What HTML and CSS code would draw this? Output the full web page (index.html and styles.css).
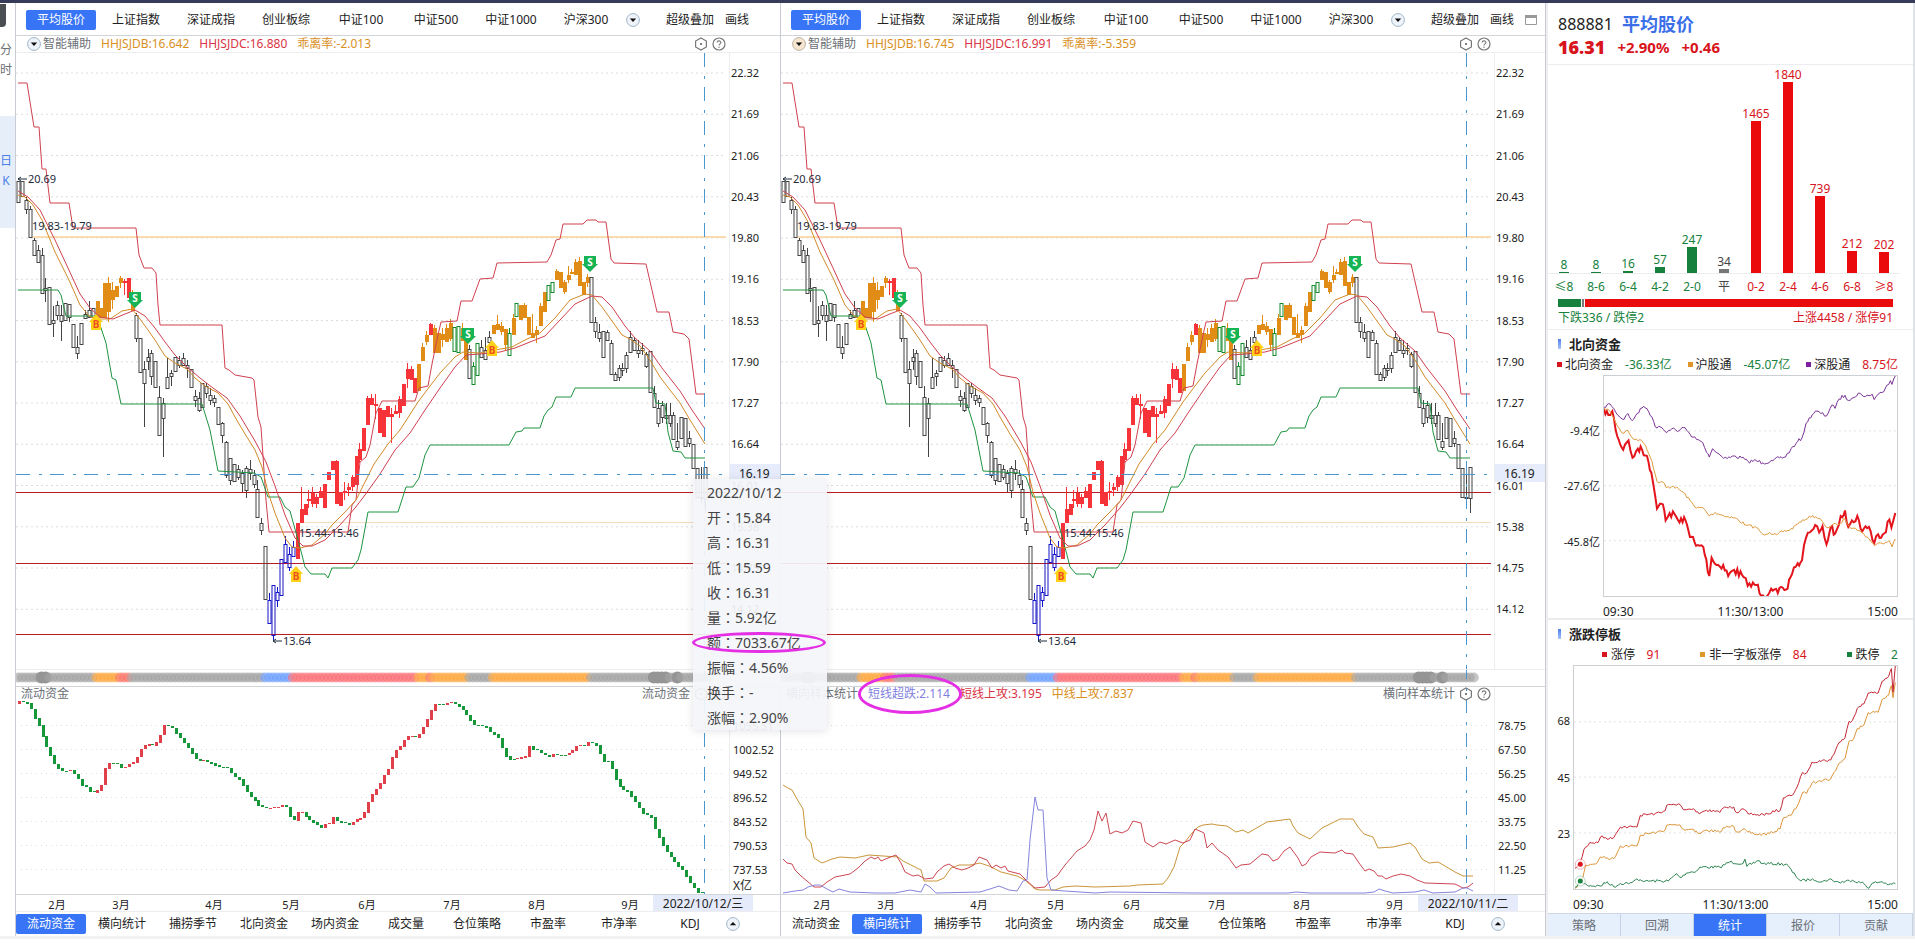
FILE: index.html
```html
<!DOCTYPE html>
<html lang="zh-CN">
<head>
  <meta charset="UTF-8" />
  <meta name="viewport" content="width=device-width, initial-scale=1.0" />
  <title>平均股价</title>
  <link rel="stylesheet" href="styles.css">
</head>
<body>
  <svg class="defs" aria-hidden="true">
    <symbol id="i-down" viewBox="0 0 14 14">
      <circle cx="7" cy="7" r="6.4" fill="#eef4fa" stroke="#9fb4c8" />
      <path d="M3.8 5.6h6.4L7 8.9z" fill="#111" />
    </symbol>
    <symbol id="i-down-warm" viewBox="0 0 14 14">
      <circle cx="7" cy="7" r="6.4" fill="#f7e6cf" stroke="#b9b2a6" />
      <path d="M3.8 5.6h6.4L7 8.9z" fill="#111" />
    </symbol>
    <symbol id="i-up" viewBox="0 0 14 14">
      <circle cx="7" cy="7" r="6.4" fill="#eef4fa" stroke="#9fb4c8" />
      <path d="M3.8 8.2h6.4L7 4.9z" fill="#111" />
    </symbol>
    <symbol id="i-hex" viewBox="0 0 14 14">
      <path d="M7 1l5.4 3v6L7 13l-5.4-3V4z" fill="none" stroke="#777" stroke-width="1.2" />
      <circle cx="7" cy="7" r="1" fill="#555" />
    </symbol>
    <symbol id="i-help" viewBox="0 0 14 14">
      <circle cx="7" cy="7" r="6" fill="none" stroke="#777" stroke-width="1.2" />
      <path d="M5.1 5.6c0-2.3 3.8-2.3 3.8 0C8.900 6.900 7 6.900 7 8.400" fill="none" stroke="#777" stroke-width="1.1" />
      <circle cx="7" cy="10.200" r=".7" fill="#777" />
    </symbol>
    <symbol id="i-window" viewBox="0 0 12 10">
      <path d="M.5.5h11v9H.5z" fill="#fff" stroke="#999" />
      <path d="M0 0h12v3H0z" fill="#999" />
    </symbol>
  </svg>

  <div class="topbar"></div>

  <div class="app">
    <nav class="rail">
      <button class="rail-item">分时</button>
      <button class="rail-item active">日K</button>
    </nav>

    <section class="panel" data-panel="left">
      <nav class="tabs">
        <button class="tab active">平均股价</button>
        <button class="tab">上证指数</button>
        <button class="tab">深证成指</button>
        <button class="tab">创业板综</button>
        <button class="tab">中证100</button>
        <button class="tab">中证500</button>
        <button class="tab">中证1000</button>
        <button class="tab">沪深300</button>
        <button class="icon-btn" aria-label="更多"><svg><use href="#i-down" /></svg></button>
        <button class="tool first">超级叠加</button>
        <button class="tool">画线</button>
      </nav>
      <div class="legend">
        <button class="icon-btn" aria-label="指标"><svg><use href="#i-down" /></svg></button>
        <span class="legend-name">智能辅助</span>
        <span class="c-orange">HHJSJDB:16.642</span>
        <span class="c-red">HHJSJDC:16.880</span>
        <span class="c-orange">乖离率:-2.013</span>
        <div class="legend-tools">
          <button class="icon-btn" aria-label="设置"><svg><use href="#i-hex" /></svg></button>
          <button class="icon-btn" aria-label="帮助"><svg><use href="#i-help" /></svg></button>
        </div>
      </div>
      <div class="chart chart-main"></div>
      <div class="chart chart-band"></div>
      <div class="sub">
        <div class="chart chart-sub"></div>
        <div class="sub-legend">
          <span class="legend-name">流动资金</span>
          <div class="legend-tools">
            <span class="legend-name">流动资金</span>
            <button class="icon-btn" aria-label="设置"><svg><use href="#i-hex" /></svg></button>
            <button class="icon-btn" aria-label="帮助"><svg><use href="#i-help" /></svg></button>
          </div>
        </div>
      </div>
      <div class="chart chart-months"></div>
      <nav class="tabs-bottom">
        <button class="tab active">流动资金</button>
        <button class="tab">横向统计</button>
        <button class="tab">捕捞季节</button>
        <button class="tab">北向资金</button>
        <button class="tab">场内资金</button>
        <button class="tab">成交量</button>
        <button class="tab">仓位策略</button>
        <button class="tab">市盈率</button>
        <button class="tab">市净率</button>
        <button class="tab">KDJ</button>
        <button class="icon-btn" aria-label="展开"><svg><use href="#i-up" /></svg></button>
      </nav>

      <ul class="tooltip">
        <li>2022/10/12</li>
        <li>开<i>：</i>15.84</li>
        <li>高<i>：</i>16.31</li>
        <li>低<i>：</i>15.59</li>
        <li>收<i>：</i>16.31</li>
        <li>量<i>：</i>5.92亿</li>
        <li class="circled">额<i>：</i>7033.67亿</li>
        <li>振幅<i>：</i>4.56%</li>
        <li>换手<i>：</i>-</li>
        <li>涨幅<i>：</i>2.90%</li>
      </ul>
    </section>

    <section class="panel" data-panel="right">
      <nav class="tabs">
        <button class="tab active">平均股价</button>
        <button class="tab">上证指数</button>
        <button class="tab">深证成指</button>
        <button class="tab">创业板综</button>
        <button class="tab">中证100</button>
        <button class="tab">中证500</button>
        <button class="tab">中证1000</button>
        <button class="tab">沪深300</button>
        <button class="icon-btn" aria-label="更多"><svg><use href="#i-down" /></svg></button>
        <button class="tool first">超级叠加</button>
        <button class="tool">画线</button>
        <button class="tool win" aria-label="窗口"><svg><use href="#i-window" /></svg></button>
      </nav>
      <div class="legend">
        <button class="icon-btn" aria-label="指标"><svg><use href="#i-down-warm" /></svg></button>
        <span class="legend-name">智能辅助</span>
        <span class="c-orange">HHJSJDB:16.745</span>
        <span class="c-red">HHJSJDC:16.991</span>
        <span class="c-orange">乖离率:-5.359</span>
        <div class="legend-tools">
          <button class="icon-btn" aria-label="设置"><svg><use href="#i-hex" /></svg></button>
          <button class="icon-btn" aria-label="帮助"><svg><use href="#i-help" /></svg></button>
        </div>
      </div>
      <div class="chart chart-main"></div>
      <div class="chart chart-band"></div>
      <div class="sub">
        <div class="chart chart-sub"></div>
        <div class="sub-legend">
          <span class="legend-name">横向样本统计</span>
          <span class="c-violet circled">短线超跌:2.114</span>
          <span class="c-red">短线上攻:3.195</span>
          <span class="c-orange">中线上攻:7.837</span>
          <div class="legend-tools">
            <span class="legend-name">横向样本统计</span>
            <button class="icon-btn" aria-label="设置"><svg><use href="#i-hex" /></svg></button>
            <button class="icon-btn" aria-label="帮助"><svg><use href="#i-help" /></svg></button>
          </div>
        </div>
      </div>
      <div class="chart chart-months"></div>
      <nav class="tabs-bottom">
        <button class="tab">流动资金</button>
        <button class="tab active">横向统计</button>
        <button class="tab">捕捞季节</button>
        <button class="tab">北向资金</button>
        <button class="tab">场内资金</button>
        <button class="tab">成交量</button>
        <button class="tab">仓位策略</button>
        <button class="tab">市盈率</button>
        <button class="tab">市净率</button>
        <button class="tab">KDJ</button>
        <button class="icon-btn" aria-label="展开"><svg><use href="#i-up" /></svg></button>
      </nav>
    </section>

    <aside class="side">
      <header class="quote">
        <div class="quote-name"><span>888881</span><strong>平均股价</strong></div>
        <div class="quote-price"><strong>16.31</strong><span>+2.90%</span><span>+0.46</span></div>
      </header>

      <section class="dist">
        <div class="dist-bars" id="distBars"></div>
        <div class="ratio"><i class="down"></i><i class="flat"></i><i class="up"></i></div>
        <div class="ratio-text"><span class="green">下跌336 / 跌停2</span><span class="red">上涨4458 / 涨停91</span></div>
      </section>

      <section class="flow">
        <h3>北向资金</h3>
        <div class="keys">
          <span class="key k-red">北向资金</span><b class="green">-36.33亿</b>
          <span class="key k-orange">沪股通</span><b class="green">-45.07亿</b>
          <span class="key k-purple">深股通</span><b class="red">8.75亿</b>
        </div>
        <div class="plot">
          <div class="plot-y"><span>-9.4亿</span><span>-27.6亿</span><span>-45.8亿</span></div>
          <div class="chart plot-area" id="flowChart"></div>
        </div>
        <div class="plot-x"><span>09:30</span><span>11:30/13:00</span><span>15:00</span></div>
      </section>

      <section class="limit">
        <h3>涨跌停板</h3>
        <div class="keys">
          <span class="key k-red">涨停</span><b class="red">91</b>
          <span class="key k-orange">非一字板涨停</span><b class="red">84</b>
          <span class="key k-green">跌停</span><b class="green">2</b>
        </div>
        <div class="plot">
          <div class="plot-y"><span>68</span><span>45</span><span>23</span></div>
          <div class="chart plot-area" id="limitChart"></div>
        </div>
        <div class="plot-x"><span>09:30</span><span>11:30/13:00</span><span>15:00</span></div>
      </section>

      <nav class="side-tabs">
        <button>策略</button>
        <button>回溯</button>
        <button class="active">统计</button>
        <button>报价</button>
        <button>贡献</button>
      </nav>
    </aside>
  </div>

  <div class="footer"></div>

  <script src="charts.js"></script>
</body>
</html>
```
FILE: styles.css
```css
:root {
  --blue: #3875f6;
  --line: #d2d5d8;
  --line-light: #ededf0;
  --text: #222;
  --muted: #6b6f76;
  --red: #d93545;
  --orange: #d98f1d;
  --up: #d8141c;
  --down: #16813c;
}

* {
  box-sizing: border-box;
}

body {
  margin: 0;
  height: 100vh;
  min-width: 1500px;
  display: flex;
  flex-direction: column;
  overflow: hidden;
  font-family: "Noto Sans", "Noto Sans CJK SC", sans-serif;
  font-size: 12px;
  line-height: 16px;
  color: var(--text);
  background: #fff;
}

button {
  border: 0;
  padding: 0;
  background: none;
  color: inherit;
  font: inherit;
  cursor: pointer;
  white-space: nowrap;
}

.defs {
  position: absolute;
  width: 0;
  height: 0;
}

.topbar {
  height: 3px;
  flex: none;
  background: #373a58;
}

.footer {
  height: 9px;
  flex: none;
  border-top: 3px solid #f2f2f2;
}

.app {
  flex: 1;
  min-height: 0;
  display: flex;
}

/* left rail */
.rail {
  width: 16px;
  flex: none;
  border-right: 1px solid #c9ccd2;
  padding-top: 1px;
}

.rail::before {
  content: "";
  display: block;
  width: 6px;
  height: 23px;
  background: #4a4d52;
  border-radius: 0 0 4px 0;
}

.rail-item {
  width: 12px;
  height: 89px;
  line-height: 20px;
  white-space: normal;
  word-break: break-all;
  color: var(--muted);
  padding-bottom: 24px;
}

.rail-item.active {
  width: 15px;
  height: 112px;
  padding: 0 3px 2px 0;
  background: #e6eefa;
  color: #4a80e8;
}

/* chart panels */
.panel {
  flex: 1;
  min-width: 0;
  display: flex;
  flex-direction: column;
  position: relative;
  border-right: 1px solid #c9ccd2;
}

.panel[data-panel="left"] {
  z-index: 1;
}

.tabs {
  height: 33px;
  flex: none;
  display: flex;
  align-items: center;
  gap: 5px;
  padding: 1px 0 0 10px;
  border-bottom: 1px solid var(--line);
}

.tab {
  width: 70px;
  height: 20px;
  line-height: 18px;
  border-radius: 2px;
}

.tab.active {
  background: var(--blue);
  color: #fff;
}

.icon-btn {
  width: 14px;
  height: 14px;
  flex: none;
}

.icon-btn svg {
  display: block;
  width: 14px;
  height: 14px;
}

.tool.first {
  margin-left: 21px;
}

.tool {
  margin-left: 6px;
}

.tool svg {
  display: block;
  width: 12px;
  height: 10px;
}

.legend {
  height: 17px;
  flex: none;
  display: flex;
  align-items: center;
  padding: 0 54px 0 11px;
  border-bottom: 1px solid var(--line-light);
}

.legend-name {
  color: var(--muted);
  margin: 0 10px 0 2px;
}

.legend > span + span {
  margin-right: 10px;
}

.legend-tools {
  display: flex;
  align-items: center;
  gap: 4px;
  margin-left: auto;
}

.legend-tools .legend-name {
  margin: 0;
}

.c-orange { color: var(--orange); }
.c-red { color: var(--red); }
.c-violet { color: #7f7fe0; }
.red { color: var(--up); }
.green { color: var(--down); }

.chart {
  overflow: hidden;
}

.chart svg {
  display: block;
}

.chart-main {
  flex: 1;
  min-height: 0;
}

.chart-band {
  height: 18px;
  flex: none;
  border-top: 1px solid var(--line-light);
  border-bottom: 1px solid var(--line);
}

.sub {
  position: relative;
  height: 208px;
  flex: none;
  border-bottom: 1px solid var(--line);
}

.chart-sub {
  height: 100%;
}

.sub-legend {
  position: absolute;
  inset: 0 0 auto 0;
  height: 14px;
  display: flex;
  align-items: center;
  gap: 10px;
  padding: 0 54px 0 5px;
}

.sub-legend > .legend-name {
  margin: 0;
}

.chart-months {
  height: 17px;
  flex: none;
  border-bottom: 1px solid var(--line-light);
}

.tabs-bottom {
  height: 24px;
  flex: none;
  display: flex;
  align-items: center;
  gap: 1px;
}

/* svg text */
.chart text {
  font-size: 11px;
  fill: #222;
}

.chart .cursor-text {
  font-size: 12px;
}

.chart .note {
  fill: #1d2b3a;
}

.chart .badge-text {
  font-size: 10px;
  font-weight: bold;
}

.chart .badge-text.sell { fill: #fff; }
.chart .badge-text.buy { fill: #f0501e; }

/* hover card */
.tooltip {
  position: absolute;
  top: 476px;
  right: -47px;
  width: 134px;
  height: 251px;
  margin: 0;
  padding: 2px 14px;
  display: flex;
  flex-direction: column;
  list-style: none;
  font-size: 14px;
  color: #444;
  background: rgba(244, 245, 250, 0.93);
  box-shadow: 0 1px 8px rgba(60, 60, 80, 0.15);
}

.tooltip li {
  flex: 1;
  line-height: 24px;
  white-space: nowrap;
}

/* centred full-width colon */
.tooltip i {
  font-style: normal;
  font-family: "Noto Sans CJK TC", sans-serif;
  -webkit-locale: "zh-Hant";
}

.circled {
  position: relative;
}

.circled::after {
  content: "";
  position: absolute;
  border: 3px solid #e42fe4;
  border-radius: 50%;
}

.tooltip .circled::after {
  inset: 2px -13px 2px -15px;
}

.sub-legend .circled::after {
  inset: -12px -12px -12px -10px;
}

/* right column */
.side {
  width: 369px;
  flex: none;
  display: flex;
  flex-direction: column;
  border-left: 2px solid #eeeef2;
  border-right: 2px solid #dfe2e8;
}

.quote {
  height: 62px;
  flex: none;
  padding: 9px 10px 0;
  border-bottom: 1px solid var(--line-light);
}

.quote-name {
  height: 23px;
  line-height: 24px;
  display: flex;
  gap: 9px;
  font-size: 16px;
}

.quote-name strong {
  font-size: 18px;
  color: #3b6fe8;
}

.quote-price {
  height: 24px;
  line-height: 24px;
  display: flex;
  gap: 12px;
  font-size: 15px;
  font-weight: bold;
  color: var(--up);
}

.quote-price strong {
  font-size: 18px;
}

.dist {
  height: 265px;
  flex: none;
  border-bottom: 1px solid var(--line-light);
}

.dist-bars {
  height: 234px;
  display: flex;
  margin-right: 13px;
}

.dist-col {
  flex: 1;
  display: flex;
  flex-direction: column;
  justify-content: flex-end;
  align-items: center;
  color: var(--down);
}

.dist-col b {
  font-weight: normal;
  line-height: 14px;
}

.dist-col i {
  width: 10px;
  background: currentColor;
}

.dist-col em {
  align-self: stretch;
  height: 26px;
  line-height: 26px;
  font-style: normal;
  text-align: center;
  border-top: 1px solid var(--line-light);
}

.dist-col.flat { color: #444; }
.dist-col.flat i { background: #777; }
.dist-col.up { color: var(--up); }
.dist-col.up i { background: #ea0c0c; }

.ratio {
  height: 8px;
  display: flex;
  gap: 1px;
  margin: 0 20px 0 10px;
}

.ratio .down { width: 23px; background: var(--down); }
.ratio .flat { width: 2px; background: #777; }
.ratio .up { flex: 1; background: #ea0c0c; }

.ratio-text {
  display: flex;
  justify-content: space-between;
  margin: 3px 20px 0 10px;
}

.flow {
  height: 290px;
  flex: none;
  padding-right: 15px;
  border-bottom: 2px solid var(--line-light);
}

.limit {
  flex: 1;
  padding-right: 15px;
}

.side h3 {
  display: flex;
  align-items: center;
  gap: 8px;
  margin: 0;
  padding: 4px 0 0 10px;
  height: 24px;
  font-size: 13px;
}

.side h3::before {
  content: "";
  width: 3px;
  height: 10px;
  background: linear-gradient(#4d7ff0, #a9c3fa);
}

.keys {
  height: 21px;
  display: flex;
  align-items: center;
  padding-left: 9px;
}

.keys b {
  font-weight: normal;
  margin-left: auto;
}

.keys b:not(:last-child) {
  margin-right: 16px;
}

.limit .keys {
  padding-left: 54px;
}

.limit .keys b:not(:last-child) {
  margin-right: 40px;
}

.key {
  display: flex;
  align-items: center;
  gap: 3px;
}

.key::before {
  content: "";
  width: 5px;
  height: 5px;
}

.limit .key {
  gap: 4px;
}

.k-red::before { background: #d8141c; }
.k-orange::before { background: #e0952a; }
.k-purple::before { background: #8020a0; }
.k-green::before { background: #16813c; }

.plot {
  display: flex;
}

.plot-y {
  width: 55px;
  height: 222px;
  display: flex;
  flex-direction: column;
  justify-content: space-evenly;
  text-align: right;
  padding-right: 3px;
  font-size: 11px;
}

.plot-y span {
  height: 16px;
  margin: -8px 0;
}

.limit .plot-y {
  width: 25px;
}

.plot-area {
  flex: 1;
  height: 222px;
  border: 1px solid #ccd0d4;
}

.limit .plot-area,
.limit .plot-y {
  height: 225px;
}

.plot-x {
  display: flex;
  justify-content: space-between;
  padding: 7px 0 0 55px;
}

.limit .plot-x {
  padding-left: 25px;
}

.side-tabs {
  height: 24px;
  flex: none;
  display: flex;
  border-top: 1px solid #cdd6e4;
}

.side-tabs button {
  flex: 1;
  background: #e6effc;
  color: var(--muted);
  border-right: 1px solid #c6d3e6;
}

.side-tabs .active {
  background: var(--blue);
  color: #fff;
}
```
FILE: charts.js
```js
// Series are kept in canvas units and mapped to the element's real size.
const FIRST_X = 18;
const STEP = 3.925;

// [top, bottom, high, low] per candle; high/low fall back to the body
const runs = [
  ['k', [[181,202],[181,196],[200,209,197,214],[209,237,206],[240,255,238],[250,262,245],[255,293,248],[288,290,278,302],[287,324],[320,323,306,337],[305,315,301,320],[315,321,305,341],[303,320],[304,317,304,322],[324,347],[347,353,336,359],[323,344],[314,318,310],[310,317,301],[308,317]]],
  ['o', [[301,318],[308,318],[283,318],[283,312,277,322],[290,300,282,309],[286,297],[278,283,276,288]]],
  ['r', [[281,283,279,295],[278,298]]],
  ['o', [[300,311,290]]],
  ['k', [[315,338,313,342],[338,372],[369,383,361,427],[357,361,349,370],[353,376,350,385],[361,387],[397,435,386],[403,418,398,457],[377,388,358],[373,376,370,386],[357,371],[360,365,356,368],[358,365,353],[365,368,360,378],[369,387],[396,400,390,407],[398,410,392,412],[383,407],[386,393,383,398],[395,400,388,405],[398,402,395,407],[407,424],[423,435,422,443],[442,475,441,478],[458,480,458,485],[464,481],[469,477,465,480],[473,483,470,492],[468,490,466,498],[469,473,460,480],[475,484,470,488],[489,517,480],[523,530,518,535],[546,599]]],
  ['b', [[600,623,593],[585,635,585,640],[592,600,587,607],[559,595],[544,562,536],[554,567,547,571],[547,556,541]]],
  ['r', [[523,559],[509,523,487],[504,515],[499,501,490,508],[493,504,487,507],[497,504,494,508],[491,498,487],[484,508],[472,480],[461,470],[461,504,460],[492,506],[491,493,482,500],[487,490,483,496],[477,487,475,491],[456,485],[449,460,443,463],[428,451],[398,425,396],[398,405,394],[404,406,394,419],[408,433],[410,437],[406,417],[414,417,408,443],[411,414,405],[399,413,396,418],[384,406],[369,379,363,388],[369,380,366],[378,393]]],
  ['o', [[364,391],[347,361,343],[335,342,331,345]]],
  ['r', [[324,335,323]]],
  ['o', [[328,353,325],[333,353],[334,340,328,347],[328,342,324],[323,339,319,341]]],
  ['g', [[327,351],[326,352]]],
  ['o', [[328,341,323],[335,360]]],
  ['k', [[349,378,345]]],
  ['g', [[366,384,362],[343,375]]],
  ['k', [[347,357,340],[350,359,337],[337,342,331,355]]],
  ['o', [[325,334],[324,330,315],[326,332,322,335]]],
  ['o', [[329,345,329,350]]],
  ['g', [[333,355,328]]],
  ['o', [[318,335,314]]],
  ['g', [[303,316]]],
  ['o', [[305,320],[305,318,303],[317,335],[333,338,314],[330,335,326,343],[306,326,303],[292,312]]],
  ['g', [[285,300],[282,292]]],
  ['o', [[271,280,269],[272,288],[282,292,280,294],[275,280,266,283],[272,274,269],[262,275,259],[261,286,257],[282,295],[277,283,274,287]]],
  ['k', [[277,322],[322,331,317,338],[332,338,324,342],[331,357],[332,340,330],[343,374,340],[374,380,372],[368,377,365,381],[368,370,363,376],[355,368,352,373],[337,352,331],[340,350,337],[350,353,340,358],[348,350,343,355],[354,366,352,368],[351,392],[393,407,386],[408,423,400,427],[405,417,401,423],[415,418,403,424],[415,423,403,427],[415,439,412],[441,447,423,450],[417,438],[418,446],[438,443,431,447],[444,468],[468,497],[497,498,467,503],[467,498,467,513]]]
];
const candleColor = { k: '#444', o: '#e08c17', r: '#f53338', b: '#1414c8', g: '#128a2a' };

const upper = [18,83,27,83,34,127,39,127,42,169,46,169,50,203,69,203,73,228,136,228,139,255,144,268,152,268,156,273,158,305,160,325,222,325,225,368,229,370,235,375,252,378,254,380,258,417,261,427,266,500,269,532,348,532,352,505,356,500,360,462,366,457,370,445,376,413,382,401,415,401,419,388,428,386,432,364,438,335,441,322,457,321,461,301,472,301,480,279,493,278,497,263,547,262,551,255,556,240,560,239,563,224,583,224,587,220,596,220,598,222,606,222,611,259,614,263,646,264,657,312,669,312,673,332,684,334,689,339,696,394,705,394];
const lower = [18,290,58,290,61,295,66,316,95,316,99,322,106,343,112,378,116,380,121,404,202,404,210,430,218,471,254,473,261,477,268,497,280,497,285,507,290,511,298,540,302,555,305,567,311,574,325,574,328,578,332,568,352,568,358,560,361,550,368,512,398,512,406,487,413,487,419,478,425,455,430,445,509,445,516,432,522,431,524,428,540,428,544,416,548,410,552,407,556,397,571,397,575,388,653,388,656,403,665,404,668,432,673,451,681,452,685,458,705,458];
const maFast = [18,195,25,197,33,205,42,220,55,252,69,280,80,305,90,317,100,319,110,319,122,311,132,309,140,319,148,330,155,340,165,356,175,363,187,369,195,378,205,386,218,393,228,404,235,417,245,434,255,450,262,467,268,492,275,513,285,538,292,547,300,548,312,545,325,534,332,525,345,512,356,500,365,482,374,464,388,444,400,430,409,416,418,402,430,386,440,373,455,357,463,352,480,353,495,350,512,347,525,340,540,333,555,318,570,300,585,294,592,295,602,307,612,321,622,335,630,339,640,346,650,360,660,377,680,403,690,420,705,444];
const maSlow = [18,191,28,197,40,210,55,240,68,268,80,294,90,308,100,317,113,319,125,314,135,310,145,316,155,328,165,342,175,355,187,367,200,378,213,388,227,398,240,416,255,441,266,462,275,486,285,515,295,538,303,546,312,546,325,540,340,525,355,508,365,495,380,474,395,450,410,433,425,410,440,388,455,367,466,355,480,354,500,352,515,348,530,342,545,336,560,320,575,304,592,296,602,297,612,307,625,326,635,338,650,351,662,368,680,391,692,410,705,429];

const money = [18,704,22,701,27,702,30,703,34,709,38,719,42,726,46,738,50,748,54,757,58,765,62,769,66,771,70,771,74,770,78,775,82,780,85,786,89,787,93,792,97,792.5,101,790,105,784,109,765,113,762,117,763,121,764,125,768,129,766,133,763,137,762,140,756,144,748,148,745,152,744,156,745,160,741,164,733,168,723,172,727,176,728,179,733,183,738,187,743,191,748,195,754,199,760,203,761,207,760,211,762,215,763,219,766,230,768,234,773,238,777,242,779,246,786,250,793,254,797,258,800,262,806,266,807,270,808,280,807,284,805,288,805,291,811,294,820,299,820,301,810,305,812,309,817,313,820,317,823,321,826,325,828,328,824,332,823,335,816,340,821,348,823,353,825,357,820,361,819,366,817,369,806,373,799,377,790,381,788,384,781,388,773,392,768,396,753,400,749,404,745,408,737,413,736,420,737,424,731,428,723,432,716,436,704,440,703,444,705,448,704,452,701,456,703,460,705,464,708,468,713,472,718,476,725,480,725,488,726,492,731,496,734,500,736,504,746,508,755,512,759,518,759,524,757,528,757,531,745,536,749,540,750,544,753,548,755,552,757,556,754,560,755,568,755,572,753,576,750,580,745,588,745,592,741,597,744,600,746,603,754,607,761,612,761,615,770,619,780,623,787,627,790,631,791,635,797,639,803,643,809,647,815,653,814,656,825,660,833,664,842,668,850,672,855,676,860,680,865,684,868,688,874,692,882,696,886,700,892,704,893];

const midAttack = [18,785,23,788,27,790,32,799,38,809,41,837,46,843,49,858,57,863,67,859,75,857,90,858,104,855,118,856,133,857,138,861,144,864,156,870,159,881,172,881,179,878,186,868,194,865,205,865,215,863,224,866,236,872,252,876,260,880,270,889,275,890,290,890,298,887,310,886,330,887,365,886,372,885,398,884,403,878,409,867,415,847,420,842,427,833,433,827,438,825,447,824,452,825,462,826,471,832,478,830,483,833,495,826,502,822,525,819,528,826,533,833,545,839,557,828,575,819,588,819,593,827,599,834,608,837,613,848,628,847,645,843,650,847,657,859,664,863,673,862,680,866,690,872,698,876,708,876];
const shortAttack = [18,859,22,863,27,864,30,870,36,876,42,881,49,887,56,887,62,882,70,877,85,874,93,868,100,861,106,857,110,859,113,857,116,861,123,858,131,855,136,863,140,872,148,876,153,875,160,879,168,878,172,872,179,866,184,864,190,868,197,870,203,868,209,865,214,857,222,860,227,868,231,865,236,868,240,866,243,871,255,874,262,881,270,888,280,887,286,880,292,876,300,865,312,851,320,846,325,840,329,830,333,811,337,821,341,813,345,834,351,831,357,833,363,830,368,821,376,823,380,842,388,847,395,842,401,844,410,840,418,843,425,840,430,829,437,832,439,833,442,848,447,843,453,850,463,857,471,868,476,865,485,864,497,854,503,855,508,861,513,859,519,851,525,847,533,858,537,866,541,864,546,857,555,852,570,853,577,850,580,853,588,854,594,863,600,871,604,869,609,871,613,876,617,876,621,879,628,876,636,874,645,876,652,880,660,883,690,884,698,888,703,887,708,883];
const oversold = [18,893,30,891,38,890,43,887,50,885,55,885,62,889,68,892,74,889,85,892,110,893,130,893,145,890,156,892,160,884,165,887,171,893,215,892,225,889,234,886,244,890,252,891,258,881,262,880,265,840,270,797,273,810,278,810,282,878,286,890,300,891,330,893,345,892,430,893,523,893,531,892,545,893,600,893,609,892,614,889,620,891,628,893,650,892,659,890,668,893,690,892,698,888,702,888,708,891];

const beads = [[93,'#a3a3a3'],[119,'#ffa63d'],[131,'#fa7268'],[265,'#a3a3a3'],[292,'#6ea0ff'],[415,'#fa6f78'],[427,'#ffa63d'],[433,'#fa7268'],[466,'#ffa63d'],[490,'#a3a3a3'],[588,'#ffa63d'],[720,'#a3a3a3']];

const flowSouth = [190,100,208,92,220,105,235,125,250,135,262,118,275,138,290,118,310,98,320,105,335,128,345,155,360,155,375,168,395,160,412,168,430,157,450,175,470,190,488,198,500,225,508,238,518,215,540,232,562,242,582,235,605,240,625,250,650,248,670,254,700,248,720,240,738,238,755,215,770,200,788,185,800,145,810,130,828,112,845,118,862,125,878,95,888,104,900,78,918,68,928,82,945,74,958,62,975,72,1000,65,1006,80,1018,65,1030,60,1045,40,1055,28,1060,38,1070,15];
const flowShang = [190,103,208,112,225,142,245,172,262,165,278,188,298,190,315,205,335,250,350,305,372,310,378,322,400,318,430,335,450,358,470,378,490,378,508,400,525,390,560,402,585,405,620,425,650,432,670,450,690,445,712,452,735,440,750,440,775,422,795,412,810,400,830,402,850,415,862,432,880,425,900,422,918,408,930,428,960,440,985,458,1006,478,1030,475,1050,468,1060,485,1070,463];
const flowNorth = [190,105,203,122,215,112,230,180,248,218,264,192,276,240,292,215,305,218,320,235,333,280,350,380,368,368,376,412,388,392,408,402,418,418,432,403,445,440,468,482,490,485,508,565,515,515,530,535,550,535,565,565,583,548,612,568,624,592,650,590,670,618,690,610,715,612,725,595,740,602,758,560,775,530,788,522,800,460,812,445,828,425,840,445,850,428,862,478,875,430,888,448,905,400,918,385,928,430,955,400,965,435,990,430,1006,475,1018,450,1036,448,1052,410,1058,432,1070,392];

const limitUp = [103,1363,120,1345,130,1312,148,1292,172,1293,180,1277,215,1282,240,1250,290,1250,300,1218,345,1213,375,1205,380,1190,420,1188,430,1202,460,1200,478,1214,500,1204,540,1210,550,1198,582,1195,590,1210,610,1200,625,1213,655,1216,690,1214,700,1205,722,1205,732,1170,760,1162,778,1130,790,1100,802,1102,818,1072,840,1068,875,1066,900,1018,918,1005,930,960,940,958,955,925,975,912,988,882,1018,882,1030,850,1050,836,1058,815,1063,880,1070,808];
const limitReal = [103,1418,125,1395,135,1355,170,1348,180,1332,220,1337,240,1302,290,1302,300,1272,350,1264,375,1258,380,1245,420,1244,430,1256,460,1256,478,1268,500,1258,540,1264,550,1252,582,1248,590,1263,610,1256,625,1264,655,1271,690,1268,722,1255,732,1225,755,1218,778,1185,790,1155,802,1158,818,1130,840,1122,875,1118,900,1075,918,1062,930,1015,940,1013,955,980,975,970,988,936,1018,935,1030,900,1050,888,1058,862,1063,895,1070,853];
const limitDown = [103,1415,120,1400,140,1410,180,1412,200,1400,220,1414,240,1405,275,1403,290,1392,315,1398,385,1398,410,1378,420,1388,440,1376,470,1370,480,1360,540,1360,570,1346,610,1350,616,1338,622,1358,655,1342,670,1350,742,1352,760,1375,785,1398,820,1392,850,1400,870,1393,900,1402,940,1396,975,1405,990,1418,1000,1404,1030,1400,1050,1408,1070,1405];

function mapper(el, d) {
  const w = el.clientWidth, h = el.clientHeight;
  return {
    w, h,
    x: v => (v - d.x[0]) / (d.x[1] - d.x[0]) * w,
    y: v => (v - d.y[0]) / (d.y[1] - d.y[0]) * h
  };
}

function put(el, m, body) {
  el.innerHTML = `<svg width="${m.w}" height="${m.h}">${body}</svg>`;
}

function line(m, pts, color, width = 1, extra = '') {
  let s = '';
  for (let i = 0; i < pts.length; i += 2) s += m.x(pts[i]).toFixed(1) + ',' + m.y(pts[i + 1]).toFixed(1) + ' ';
  return `<polyline points="${s}" fill="none" stroke="${color}" stroke-width="${width}" ${extra}/>`;
}

function text(m, x, y, str, cls = '') {
  return `<text x="${m.x(x).toFixed(0)}" y="${(m.y(y) + 4).toFixed(0)}" class="${cls}">${str}</text>`;
}

// intraday series tick up and down between the stored points
function jitter(pts, amp) {
  const out = [];
  let seed = 7;
  for (let i = 0; i < pts.length - 2; i += 2) {
    const [x1, y1, x2, y2] = pts.slice(i, i + 4);
    const n = Math.max(1, Math.round((x2 - x1) / 5));
    for (let k = 0; k < n; k++) {
      seed = (seed * 16807) % 2147483647;
      const r = k ? (seed / 2147483647 - 0.5) * amp : 0;
      out.push(x1 + (x2 - x1) * k / n, y1 + (y2 - y1) * k / n + r);
    }
  }
  return out.concat(pts.slice(-2));
}

function crossV(m, x, d) {
  return line(m, [x, d.y[0], x, d.y[1]], '#4a97d2', 1, `stroke-dasharray="14 9 3 8" stroke-dashoffset="${(d.y[0] - 53) % 34}" shape-rendering="crispEdges"`);
}

function badge(m, x, y, kind) {
  const cx = Math.round(m.x(x)), cy = Math.round(m.y(y));
  const sell = kind === 'S';
  const shape = sell
    ? `<path d="M-6-8H6V0H8L0 8-8 0H-6z" fill="#16b455"/>`
    : `<path d="M-5 8H5V0H7L0-8-7 0H-5z" fill="#ffd21a"/>`;
  return `<g transform="translate(${cx} ${cy})">${shape}<text text-anchor="middle" y="${sell ? 2 : 6}" class="badge-text ${sell ? 'sell' : 'buy'}">${kind}</text></g>`;
}

function candles(m) {
  let s = '', i = 0;
  const sx = m.w / 764;
  for (const [type, list] of runs) {
    const c = candleColor[type];
    const solid = type === 'o' || type === 'r';
    for (const [t, b, hi = t, lo = b] of list) {
      const x = Math.round(m.x(FIRST_X + STEP * i));
      const w = (solid ? 4 : 3) * sx;
      const yt = Math.round(m.y(t)), yb = Math.round(m.y(b));
      s += `<path d="M${x + .5} ${m.y(hi).toFixed(0)}V${yt}M${x + .5} ${yb}V${m.y(lo).toFixed(0)}" stroke="${c}"/>`;
      s += solid
        ? `<rect x="${x - 1}" y="${yt}" width="${w}" height="${Math.max(1, yb - yt)}" fill="${c}"/>`
        : `<rect x="${x - 1}" y="${yt + .5}" width="${w}" height="${Math.max(1, yb - yt)}" fill="none" stroke="${c}"/>`;
      i++;
    }
  }
  return s;
}

function drawMain(el, cross) {
  const d = { x: [16, 780], y: [53, 669] };
  const m = mapper(el, d);
  let s = '';
  const prices = ['22.32', '21.69', '21.06', '20.43', '19.80', '19.16', '18.53', '17.90', '17.27', '16.64', '16.01', '15.38', '14.75', '14.12'];
  prices.forEach((p, i) => {
    const y = 73 + 41.25 * i;
    s += line(m, [16, y, 726, y], '#dcdcdc', 1, 'stroke-dasharray="2 3"');
    s += text(m, 731, y, p);
  });
  s += line(m, [729.5, 53, 729.5, 669], '#ededf0');
  s += line(m, [33, 237, 726, 237], '#fbdcb0', 2);
  s += line(m, [302, 522.5, 726, 522.5], '#f5dcc0');
  [492.5, 563.5, 634.5].forEach(y => { s += line(m, [16, y, 726, y], '#b81c22'); });
  s += candles(m);
  s += line(m, upper, '#d0414f') + line(m, lower, '#1e9440') + line(m, maFast, '#d18a28') + line(m, maSlow, '#d0414f');
  s += line(m, [27, 179, 18, 179], '#1d2b3a') + line(m, [21, 177, 18, 179, 21, 181], '#1d2b3a');
  s += text(m, 28, 179, '20.69', 'note') + text(m, 32, 226, '19.83-19.79', 'note');
  s += text(m, 299, 533, '15.44-15.46', 'note') + text(m, 283, 641, '13.64', 'note');
  s += line(m, [282, 641, 273, 641], '#1d2b3a') + line(m, [276, 639, 273, 641, 276, 643], '#1d2b3a');
  s += badge(m, 96, 322, 'B') + badge(m, 135, 300, 'S') + badge(m, 296, 574, 'B');
  s += badge(m, 468, 336, 'S') + badge(m, 492, 348, 'B') + badge(m, 590, 264, 'S');
  s += line(m, [16, 474.5, 726, 474.5], '#4a97d2', 1, 'stroke-dasharray="14 9 3 8"');
  s += crossV(m, cross, d);
  s += `<rect x="${m.x(730)}" y="${m.y(464)}" width="${m.w}" height="18" fill="#e6ecfb"/>`;
  s += text(m, 739, 474, '16.19', 'cursor-text');
  put(el, m, s);
}

function drawBand(el, cross) {
  const d = { x: [16, 780], y: [670, 686] };
  const m = mapper(el, d);
  let s = '';
  for (let x = FIRST_X; x < 709; x += STEP) {
    const big = (x > 39 && x < 49) || (x > 651 && x < 668) || (x > 676 && x < 680);
    const color = big ? '#959595' : beads.find(b => x < b[0])[1];
    s += `<circle cx="${m.x(x)}" cy="${m.y(677.5)}" r="${big ? 6 : 5}" fill="${color}" fill-opacity="${big ? 1 : .62}"/>`;
  }
  s += crossV(m, cross, d);
  put(el, m, s);
}

function drawSub(el, side, cross) {
  const d = { x: [16, 780], y: [687, 894] };
  const m = mapper(el, d);
  const labels = side === 'left'
    ? ['1055.51', '1002.52', '949.52', '896.52', '843.52', '790.53', '737.53']
    : ['78.75', '67.50', '56.25', '45.00', '33.75', '22.50', '11.25'];
  let s = '';
  labels.forEach((p, i) => {
    const y = 725.5 + 24 * i;
    s += line(m, [21, y, 726, y], '#dedede', 1, 'stroke-dasharray="1 4"');
    s += text(m, 733, y, p);
  });
  s += line(m, [729.5, 687, 729.5, 894], '#ededf0');
  if (side === 'left') {
    const at = x => {
      let k = 0;
      while (k < money.length - 4 && money[k + 2] < x) k += 2;
      const [x1, y1, x2, y2] = money.slice(k, k + 4);
      return y1 + (y2 - y1) * (x - x1) / (x2 - x1);
    };
    for (let x = FIRST_X; x < 703; x += STEP) {
      const a = at(x), b = at(x + STEP);
      const h = Math.max(1, Math.abs(a - b) + .5);
      s += `<rect x="${m.x(x).toFixed(0)}" y="${m.y(Math.min(a, b)).toFixed(0)}" width="3" height="${h.toFixed(0)}" fill="${b < a ? '#e0404a' : '#17963a'}"/>`;
    }
    s += `<text class="cursor-text" x="${m.x(733)}" y="${m.y(890)}">X亿</text>`;
  } else {
    s += line(m, midAttack, '#c9953a') + line(m, shortAttack, '#cc4753') + line(m, oversold, '#8484dc');
  }
  s += crossV(m, cross, d);
  put(el, m, s);
}

function drawMonths(el, side) {
  const m = mapper(el, { x: [16, 780], y: [895, 911] });
  const left = side === 'left';
  let s = '';
  [57, 121, 214, 291, 367, 452, 537, 630].forEach((x, i) => {
    s += `<text x="${m.x(x)}" y="14" text-anchor="middle">${i + 2}月</text>`;
  });
  s += `<rect x="${m.x(653)}" y="0" width="100" height="16" fill="#e6ebfb"/>`;
  s += `<text x="${m.x(653) + 50}" y="13" text-anchor="middle" class="cursor-text">${left ? '2022/10/12/三' : '2022/10/11/二'}</text>`;
  put(el, m, s);
}

function drawFlow() {
  const el = document.getElementById('flowChart');
  const m = mapper(el, { x: [190, 1075], y: [15, 620] });
  let s = '';
  [166, 317, 468].forEach(y => { s += line(m, [190, y, 1075, y], '#e2e2e2', 1, 'stroke-dasharray="2 3"'); });
  s += line(m, jitter(flowNorth, 22), '#e3141c', 2);
  s += line(m, jitter(flowShang, 8), '#e09a3a') + line(m, jitter(flowSouth, 10), '#7a3196');
  put(el, m, s);
}

function drawLimit() {
  const el = document.getElementById('limitChart');
  const m = mapper(el, { x: [100, 1075], y: [808, 1420] });
  let s = '';
  [961, 1113, 1266].forEach(y => { s += line(m, [100, y, 1075, y], '#e2e2e2', 1, 'stroke-dasharray="2 3"'); });
  s += line(m, jitter(limitReal, 8), '#dd9336') + line(m, jitter(limitUp, 8), '#c42634') + line(m, jitter(limitDown, 8), '#2a8350');
  [[1352, '#d8141c'], [1398, '#16813c']].forEach(([y, c]) => {
    s += `<circle cx="${m.x(119)}" cy="${m.y(y)}" r="5" fill="#fff" fill-opacity=".7" stroke="${c}" stroke-opacity=".3"/>`;
    s += `<circle cx="${m.x(119)}" cy="${m.y(y)}" r="2.5" fill="${c}"/>`;
  });
  put(el, m, s);
}

function drawDist() {
  const data = [['≤8', 8], ['8-6', 8], ['6-4', 16], ['4-2', 57], ['2-0', 247], ['平', 34], ['0-2', 1465], ['2-4', 1840], ['4-6', 739], ['6-8', 212], ['≥8', 202]];
  document.getElementById('distBars').innerHTML = data.map(([name, n], i) => {
    const cls = i < 5 ? '' : i === 5 ? 'flat' : 'up';
    return `<div class="dist-col ${cls}"><b>${n}</b><i style="height:${Math.max(1, Math.round(n * 0.104))}px"></i><em>${name}</em></div>`;
  }).join('');
}

function drawAll() {
  document.querySelectorAll('.panel').forEach(p => {
    const side = p.dataset.panel;
    const cross = side === 'left' ? 704.5 : 701.5;
    drawMain(p.querySelector('.chart-main'), cross);
    drawBand(p.querySelector('.chart-band'), cross);
    drawSub(p.querySelector('.chart-sub'), side, cross);
    drawMonths(p.querySelector('.chart-months'), side);
  });
  drawFlow();
  drawLimit();
}

drawDist();
drawAll();
window.addEventListener('resize', drawAll);
```
